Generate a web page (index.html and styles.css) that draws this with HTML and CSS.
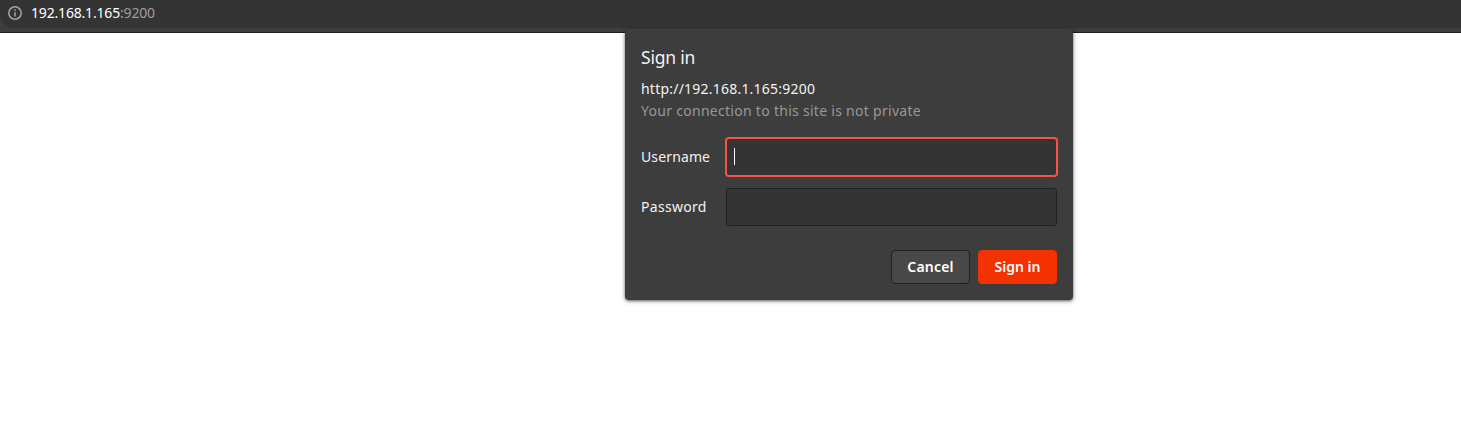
FILE: index.html
```html
<!DOCTYPE html>
<html lang="en">
<head>
<meta charset="utf-8">
<title>192.168.1.165:9200</title>
<link rel="stylesheet" href="styles.css">
</head>
<body>
<header class="toolbar">
  <div class="address">
    <svg class="info" width="14" height="14" viewBox="0 0 14 14" fill="none" stroke="#a3a5a8">
      <circle cx="7" cy="7" r="6.2" stroke-width="1.5"/>
      <path d="M7 6.2v4.3M7 3.5V5" stroke-width="1.5"/>
    </svg>
    <span class="url">192.168.1.165<span class="port">:9200</span></span>
  </div>
</header>
<form class="dialog">
  <h1 class="title">Sign in</h1>
  <div class="origin">http://192.168.1.165:9200</div>
  <div class="notice">Your connection to this site is not private</div>
  <div class="row row-user">
    <span class="label label-user">Username</span>
    <div class="field focused"><span class="caret"></span></div>
  </div>
  <div class="row row-pass">
    <span class="label label-pass">Password</span>
    <div class="field"></div>
  </div>
  <div class="actions">
    <button type="button" class="btn">Cancel</button>
    <button type="button" class="btn primary">Sign in</button>
  </div>
</form>
</body>
</html>
```
FILE: styles.css
```css
* { box-sizing: border-box; }
body {
  margin: 0;
  height: 429px;
  overflow: hidden;
  background: #fff;
  font-family: "Noto Sans", "Open Sans", sans-serif;
  font-size: 14px;
  color: #f2f2f2;
}
.toolbar {
  height: 33px;
  background: #3d3d3d;
  border-bottom: 1px solid #1f1f1f;
}
.address {
  display: flex;
  align-items: center;
  gap: 9px;
  height: 28px;
  padding: 0 8px 2px;
  background: #343434;
  border-bottom-left-radius: 14px;
}
.url { line-height: 20px; color: #fff; letter-spacing: -0.18px; }
.port { color: #9c9ea1; }
.dialog {
  position: absolute;
  left: 625px;
  top: 29px;
  width: 448px;
  height: 271px;
  padding: 16px;
  background: #3d3d3d;
  border-radius: 4px;
  box-shadow: 0 1px 3px rgba(0, 0, 0, .55), 0 1px 6px rgba(0, 0, 0, .2);
}
.title {
  margin: 0 0 8px;
  font-size: 17.5px;
  font-weight: 400;
  line-height: 25px;
  letter-spacing: -0.2px;
}
.origin { line-height: 22px; white-space: nowrap; letter-spacing: 0.22px; }
.notice { line-height: 22px; color: #989898; white-space: nowrap; letter-spacing: 0.285px; }
.row {
  display: grid;
  grid-template-columns: 85px 331px;
  align-items: center;
  height: 38px;
}
.row-user { margin-top: 16px; }
.row-pass { margin-top: 12px; }
.label { line-height: 20px; }
.label-user { letter-spacing: 0.13px; }
.label-pass { letter-spacing: 0.3px; }
.field {
  display: flex;
  align-items: center;
  height: 38px;
  padding-left: 7px;
  background: #343434;
  border: 1px solid #202020;
  border-radius: 3px;
}
.focused { border-color: #fc5148; box-shadow: 0 0 0 1px #fc5148; }
.caret { width: 1px; height: 17px; margin-bottom: 1px; background: #fff; }
.actions {
  display: flex;
  justify-content: flex-end;
  gap: 8px;
  margin-top: 24px;
}
.btn {
  width: 79px;
  height: 34px;
  padding: 0;
  border: 1px solid #202020;
  border-radius: 4px;
  background: #484848;
  color: #fff;
  font: 600 14px/20px "Noto Sans", "Open Sans", sans-serif;
  letter-spacing: 0.2px;
}
.primary { background: #f43100; border-color: #f43100; letter-spacing: 0; }
```
